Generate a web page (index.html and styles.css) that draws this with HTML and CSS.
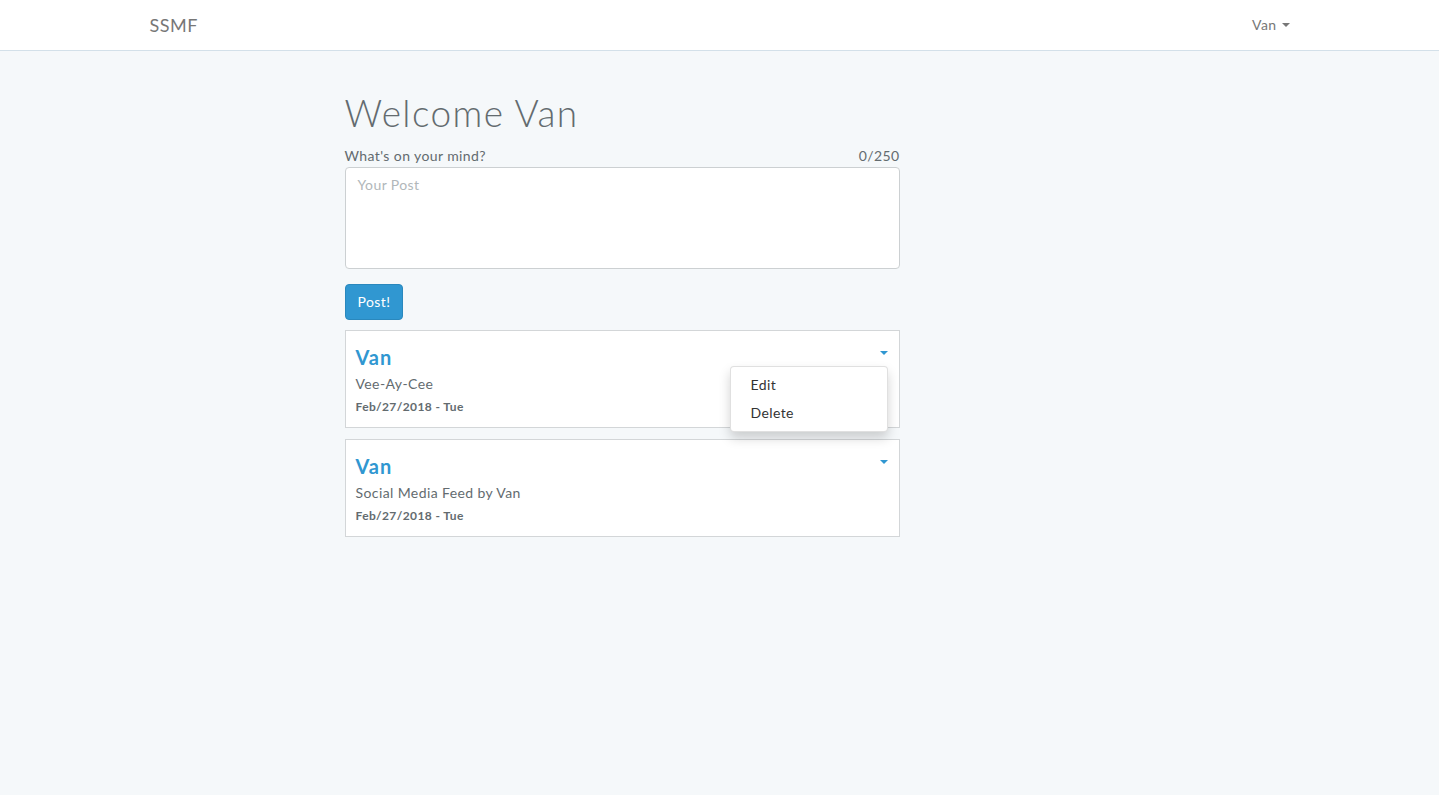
FILE: index.html
```html
<!DOCTYPE html>
<html lang="en">
<head>
<meta charset="utf-8">
<title>SSMF</title>
<link rel="stylesheet" href="styles.css">
</head>
<body>
<nav class="navbar">
  <div class="nav-inner">
    <a class="brand" href="#">SSMF</a>
    <a class="user" href="#">Van <span class="caret"></span></a>
  </div>
</nav>
<main class="container">
  <div class="col">
    <h1 class="title">Welcome Van</h1>
    <div class="label-row">
      <span>What's on your mind?</span>
      <span>0/250</span>
    </div>
    <textarea class="post-input" placeholder="Your Post"></textarea>
    <button class="btn">Post!</button>

    <div class="card">
      <span class="card-caret caret"></span>
      <div class="card-name">Van</div>
      <div class="card-body">Vee-Ay-Cee</div>
      <div class="card-date">Feb/27/2018 - Tue</div>
      <ul class="menu">
        <li>Edit</li>
        <li>Delete</li>
      </ul>
    </div>

    <div class="card">
      <span class="card-caret caret"></span>
      <div class="card-name">Van</div>
      <div class="card-body">Social Media Feed by Van</div>
      <div class="card-date">Feb/27/2018 - Tue</div>
    </div>
  </div>
</main>
</body>
</html>
```

FILE: styles.css
```css
* { box-sizing: border-box; }
html, body { margin: 0; height: 100%; }
body {
  background: #f5f8fa;
  font-family: "Lato", "Open Sans", sans-serif;
  font-size: 14px;
  line-height: 1.6;
  color: #636b6f;
  letter-spacing: 0.4px;
}
.navbar {
  background: #fff;
  border-bottom: 1px solid #d3e0e9;
  height: 51px;
}
.nav-inner {
  width: 1170px;
  margin: 0 auto;
  padding: 0 15px;
  height: 50px;
  display: flex;
  justify-content: space-between;
  align-items: center;
}
.brand {
  font-size: 18px;
  color: #777;
  text-decoration: none;
  letter-spacing: 0.5px;
}
.user {
  color: #777;
  text-decoration: none;
  font-size: 14px;
  display: flex;
  align-items: center;
  gap: 5px;
}
.caret {
  display: inline-block;
  width: 0;
  height: 0;
  border-top: 4px solid currentColor;
  border-left: 4px solid transparent;
  border-right: 4px solid transparent;
}
.container {
  width: 1170px;
  margin: 0 auto;
  padding: 0 15px;
}
.col {
  width: 555px;
  margin-left: 195px;
}
.title {
  font-size: 37px;
  font-weight: 300;
  line-height: 40px;
  margin: 42px 0 0;
  color: #636b6f;
  letter-spacing: 1.4px;
}
.label-row {
  display: flex;
  justify-content: space-between;
  margin-top: 12px;
  line-height: 22px;
}
.post-input {
  display: block;
  width: 100%;
  height: 102px;
  margin-top: 0;
  padding: 6px 12px;
  border: 1px solid #ccd0d2;
  border-radius: 4px;
  font: inherit;
  letter-spacing: 0.4px;
  color: #555;
  resize: none;
  background: #fff;
}
.post-input::placeholder { color: #b1b7ba; }
.btn {
  display: block;
  margin-top: 15px;
  height: 36px;
  padding: 0 12px;
  background: #3097d1;
  border: 1px solid #2a88bd;
  border-radius: 4px;
  color: #fff;
  font: inherit;
  letter-spacing: 0.4px;
  font-size: 14px;
}
.card {
  position: relative;
  margin-top: 10px;
  background: #fff;
  border: 1px solid #d3d6d8;
  padding: 13px 10px 0;
  height: 98px;
}
.card + .card { margin-top: 11px; }
.card-caret {
  position: absolute;
  right: 11px;
  top: 20px;
  color: #3097d1;
}
.card-name {
  font-size: 20px;
  font-weight: 700;
  color: #3097d1;
  line-height: 26px;
  letter-spacing: 1px;
}
.card-body {
  line-height: 22px;
  margin-top: 3px;
}
.card-date {
  font-size: 12px;
  font-weight: 700;
  line-height: 20px;
  margin-top: 2px;
}
.menu {
  position: absolute;
  right: 11px;
  top: 35px;
  width: 158px;
  margin: 0;
  padding: 4px 0;
  list-style: none;
  background: #fff;
  border: 1px solid rgba(0,0,0,0.12);
  border-radius: 4px;
  box-shadow: 0 6px 12px rgba(0,0,0,0.175);
  z-index: 2;
}
.menu li {
  padding: 3px 20px;
  line-height: 22px;
  color: #333;
}
```
